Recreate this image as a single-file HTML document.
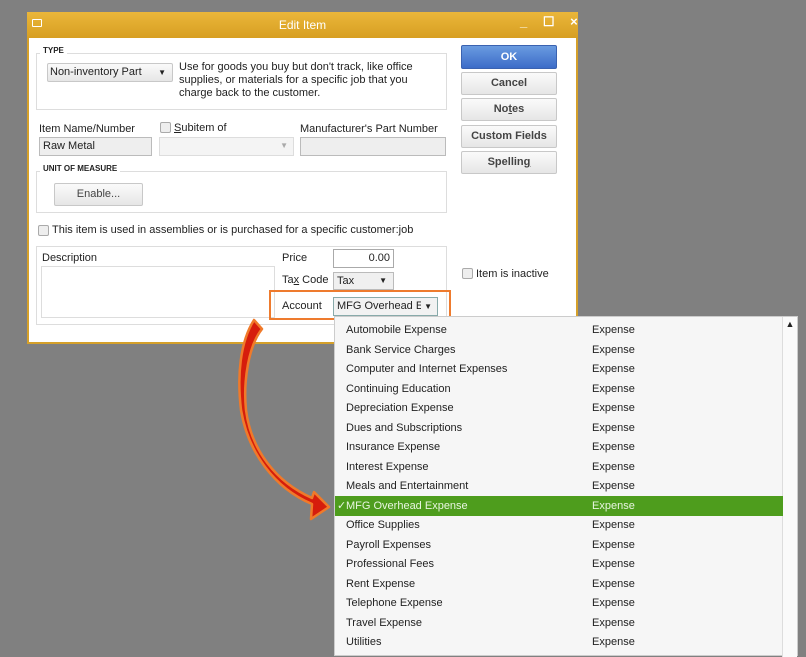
<!DOCTYPE html><html><head><style>
*{box-sizing:border-box;margin:0;padding:0}
body{width:806px;height:648px;background:#808080;font-family:"Liberation Sans",Arial,sans-serif;font-size:11px;color:#222;position:relative;overflow:hidden}
.a{position:absolute}
.dlg{left:27px;top:12px;width:551px;height:332px;background:#fff;border:2px solid #d5a02a;border-top:none}
.title{left:27px;top:12px;width:551px;height:26px;background:linear-gradient(#eab63a,#d79f22);color:#fff;font-size:12px;text-align:center;line-height:26px}
.box{border:1px solid #ddd;background:#fff}
.btn{border:1px solid #c8c8c8;border-radius:2px;background:linear-gradient(#fafafa,#e6e6e6);text-align:center;font-weight:bold;color:#444;font-size:11px}
.inp{border:1px solid #bbb;background:#eee}
.cb{width:11px;height:11px;border:1px solid #aaa;border-radius:2px;background:#eee}
.row{position:absolute;left:0;width:448px;height:20px;line-height:20px}
.row span{position:absolute;left:11px}.row b{font-weight:normal;position:absolute;left:257px}
</style></head><body>
<div class="a dlg"></div>
<div class="a title">Edit Item</div>
<div class="a" style="left:32px;top:19px;width:10px;height:8px;border:1px solid #fff;border-radius:1px"></div>
<div class="a" style="left:520px;top:14px;color:#fff;font-size:13px;font-weight:bold;letter-spacing:6px">_ ☐ ×</div>
<div class="a box" style="left:36px;top:53px;width:411px;height:57px"></div>
<div class="a" style="left:40px;top:46px;background:#fff;padding:0 3px;font-size:8px;font-weight:bold">TYPE</div>
<div class="a btn" style="left:47px;top:63px;width:126px;height:19px;font-weight:normal;color:#222;text-align:left;padding-left:2px;line-height:17px">Non-inventory Part<span style="position:absolute;right:6px;font-size:8px">▼</span></div>
<div class="a" style="left:179px;top:61px;width:240px;line-height:13px">Use for goods you buy but don't track, like office supplies, or materials for a specific job that you charge back to the customer.</div>
<div class="a" style="left:39px;top:123px">Item Name/Number</div>
<div class="a cb" style="left:160px;top:122px"></div>
<div class="a" style="left:174px;top:122px"><u>S</u>ubitem of</div>
<div class="a" style="left:300px;top:123px">Manufacturer's Part Number</div>
<div class="a inp" style="left:39px;top:137px;width:113px;height:19px;padding-left:3px;line-height:17px">Raw Metal</div>
<div class="a" style="left:159px;top:137px;width:135px;height:19px;border:1px solid #ddd;background:#f4f4f4"><span style="position:absolute;right:5px;top:3px;font-size:8px;color:#aaa">▼</span></div>
<div class="a inp" style="left:300px;top:137px;width:146px;height:19px"></div>
<div class="a box" style="left:36px;top:171px;width:411px;height:42px"></div>
<div class="a" style="left:40px;top:164px;background:#fff;padding:0 3px;font-size:8px;font-weight:bold">UNIT OF MEASURE</div>
<div class="a btn" style="left:54px;top:183px;width:89px;height:23px;line-height:21px;font-weight:normal">Enable...</div>
<div class="a cb" style="left:38px;top:225px"></div>
<div class="a" style="left:52px;top:224px">This item is used in assemblies or is purchased for a specific customer:job</div>
<div class="a box" style="left:36px;top:246px;width:411px;height:79px"></div>
<div class="a" style="left:42px;top:252px">Description</div>
<div class="a box" style="left:41px;top:266px;width:234px;height:52px"></div>
<div class="a" style="left:282px;top:252px">Price</div>
<div class="a" style="left:333px;top:249px;width:61px;height:19px;border:1px solid #aaa;text-align:right;padding-right:3px;line-height:17px">0.00</div>
<div class="a" style="left:282px;top:274px">Ta<u>x</u> Code</div>
<div class="a" style="left:333px;top:272px;width:61px;height:18px;border:1px solid #bbb;background:#f0f0f0;padding-left:3px;line-height:16px">Tax<span style="position:absolute;right:6px;font-size:8px">▼</span></div>
<div class="a" style="left:269px;top:290px;width:182px;height:30px;border:2px solid #ee7b2e"></div>
<div class="a" style="left:282px;top:300px">Account</div>
<div class="a" style="left:333px;top:297px;width:105px;height:19px;border:1px solid #8aa;background:#f2f2f2;padding-left:3px;line-height:17px;overflow:hidden;white-space:nowrap">MFG Overhead Ex<span style="position:absolute;right:0;padding:0 5px 0 3px;font-size:8px;background:#f2f2f2">▼</span></div>
<div class="a btn" style="left:461px;top:45px;width:96px;height:24px;line-height:22px;background:linear-gradient(#6a9be0,#3c6cc8);color:#fff;border-color:#3a62b0">OK</div>
<div class="a btn" style="left:461px;top:72px;width:96px;height:23px;line-height:21px">Cancel</div>
<div class="a btn" style="left:461px;top:98px;width:96px;height:23px;line-height:21px">No<u>t</u>es</div>
<div class="a btn" style="left:461px;top:125px;width:96px;height:23px;line-height:21px">Custom Fields</div>
<div class="a btn" style="left:461px;top:151px;width:96px;height:23px;line-height:21px">Spellin<u>g</u></div>
<div class="a cb" style="left:462px;top:268px"></div>
<div class="a" style="left:476px;top:268px">Item is inactive</div>
<div class="a" style="left:334px;top:316px;width:464px;height:340px;background:#f6f6f6;border:1px solid #ccc">
<div class="a" style="right:0;top:0;width:15px;height:340px;background:#fafafa;border-left:1px solid #ddd"><div style="font-size:9px;text-align:center;margin-top:2px">▲</div></div>
<div class="row" style="top:3px"><span>Automobile Expense</span><b>Expense</b></div>
<div class="row" style="top:22.5px"><span>Bank Service Charges</span><b>Expense</b></div>
<div class="row" style="top:42px"><span>Computer and Internet Expenses</span><b>Expense</b></div>
<div class="row" style="top:61.5px"><span>Continuing Education</span><b>Expense</b></div>
<div class="row" style="top:81px"><span>Depreciation Expense</span><b>Expense</b></div>
<div class="row" style="top:100.5px"><span>Dues and Subscriptions</span><b>Expense</b></div>
<div class="row" style="top:120px"><span>Insurance Expense</span><b>Expense</b></div>
<div class="row" style="top:139.5px"><span>Interest Expense</span><b>Expense</b></div>
<div class="row" style="top:159px"><span>Meals and Entertainment</span><b>Expense</b></div>
<div class="row" style="top:178.5px;background:#4e9d1d;color:#e8f5e0"><span style="left:2px">✓</span><span>MFG Overhead Expense</span><b>Expense</b></div>
<div class="row" style="top:198px"><span>Office Supplies</span><b>Expense</b></div>
<div class="row" style="top:217.5px"><span>Payroll Expenses</span><b>Expense</b></div>
<div class="row" style="top:237px"><span>Professional Fees</span><b>Expense</b></div>
<div class="row" style="top:256.5px"><span>Rent Expense</span><b>Expense</b></div>
<div class="row" style="top:276px"><span>Telephone Expense</span><b>Expense</b></div>
<div class="row" style="top:295.5px"><span>Travel Expense</span><b>Expense</b></div>
<div class="row" style="top:315px"><span>Utilities</span><b>Expense</b></div>
</div>
<svg class="a" style="left:0;top:0" width="806" height="648">
<path d="M254 320 L262 329 C249 345 243 380 246 410 C251 450 276 482 312 498 L314 492 L329 507 L311 519 L312 504 C274 488 248 452 241 410 C237 376 240 342 254 320 Z" fill="#d61d0c" stroke="#f07a2a" stroke-width="2.5" stroke-linejoin="round"/>
</svg>
</body></html>
